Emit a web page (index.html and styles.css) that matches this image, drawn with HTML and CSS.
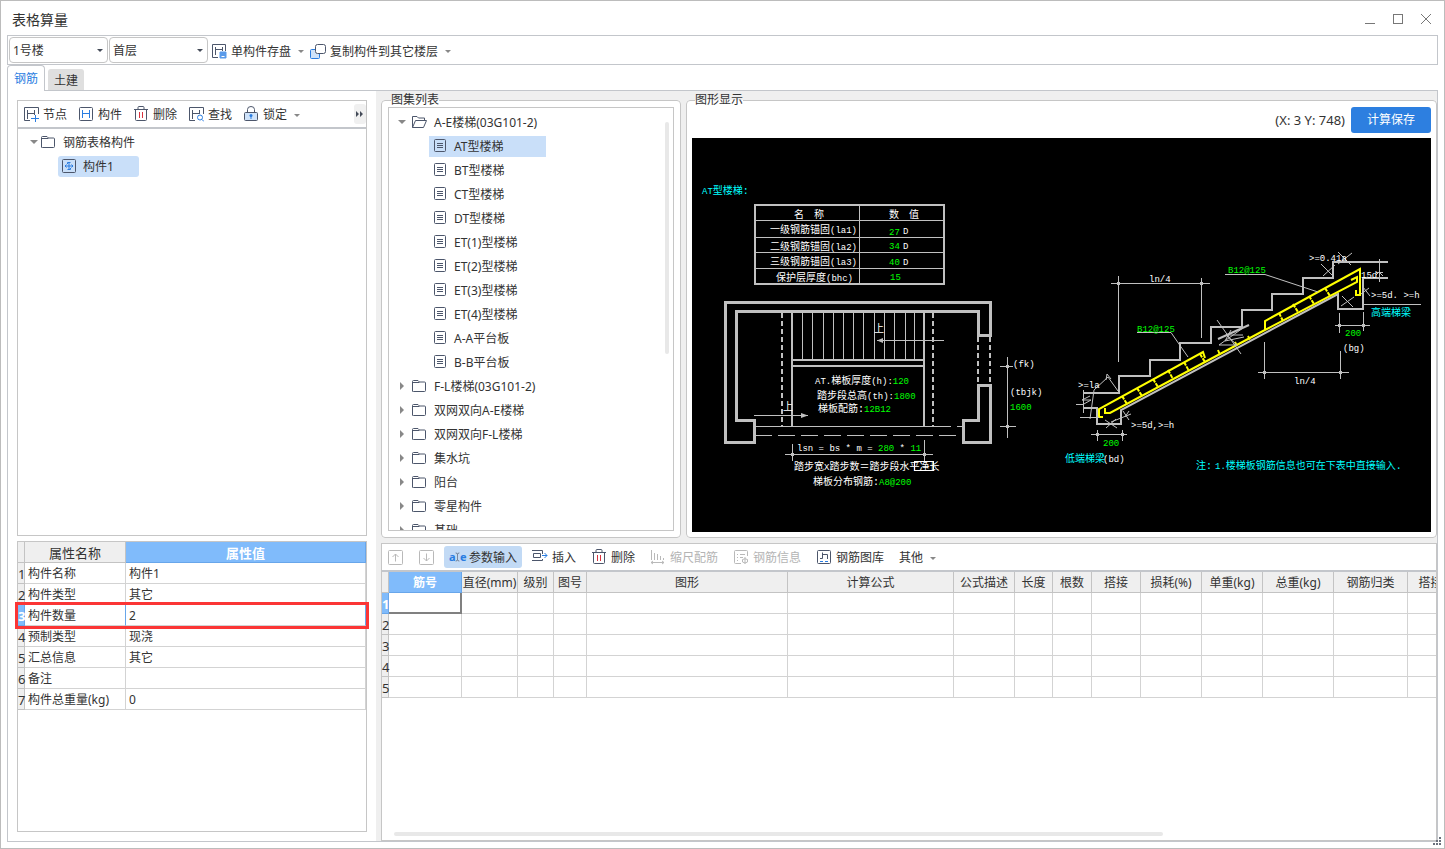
FILE: index.html
```html
<!DOCTYPE html>
<html lang="zh-CN">
<head>
  <meta charset="UTF-8">
  <meta name="viewport" content="width=device-width, initial-scale=1.0">
  <title>表格算量</title>
  <link rel="stylesheet" href="styles.css">
</head>
<body>

  <!-- Shared icons -->
  <svg class="sprite" aria-hidden="true">
    <symbol id="i-folder" viewBox="0 0 16 16"><path d="M1.5 13.500V3.500q0-1 1-1H7l1.500 1.500H13.500q1 0 1 1V12.500q0 1-1 1H2.500q-1 0-1-1M1.500 4.500H8.500"/></symbol>
    <symbol id="i-open" viewBox="0 0 16 16"><path d="M1.500 13.500V2.500H6l1.500 1.500H13.500V6M1.500 13.500L4.500 6.500H15.500L12.500 13.500Z"/></symbol>
    <symbol id="i-doc" viewBox="0 1 16 16"><rect x="2.500" y="2.500" width="11" height="12" rx="1"/><path d="M5 6.500H11M5 8.500H11M5 10.500H11"/></symbol>
    <symbol id="i-node" viewBox="0 0 16 16"><path d="M15.500 8V1.500H1.500V14.500H7M4.500 4V13M4.500 7.500H11.500M11.500 4V9"/><path class="blue" d="M8 12.500H16M12.500 9V16"/></symbol>
    <symbol id="i-part" viewBox="0 0 16 16"><rect x="1.500" y="1.500" width="13" height="13" rx="1"/><path class="blue" d="M4.500 4V12M11.500 4V12M4.500 7.500H11.500"/></symbol>
    <symbol id="i-trash" viewBox="0 0 16 16"><path d="M1 3.500H15M5 3V1.500Q5 .500 6 .500H10Q11 .500 11 1.500V3M2.500 3.500V13.500Q2.500 14.500 3.500 14.500H12.500Q13.500 14.500 13.500 13.500V3.500"/><path class="red" d="M6.500 6V12M9.500 6V12"/></symbol>
    <symbol id="i-find" viewBox="0 0 16 16"><path d="M15.500 8V1.500H1.500V14.500H7M4.500 4V13M4.500 7.500H11.500M11.500 4V8"/><circle class="blue" cx="12" cy="11.500" r="2.500"/><path class="blue" d="M14 13.500L16 15.500"/></symbol>
    <symbol id="i-lock" viewBox="0 0 16 16"><path d="M4.500 6V3.500Q4.500 .500 8 .500T11.500 3.500V6"/><rect class="tint" x="1.500" y="6.500" width="13" height="8" rx="1"/><circle class="dot" cx="8" cy="9.500" r="1.500"/><path class="blue" d="M8 9V13"/></symbol>
    <symbol id="i-save" viewBox="0 0 16 16"><path d="M14.500 8V1.500H1.500V14.500H7M4.500 4V12M4.500 6.500H11.500M11.500 4V8"/><path class="fillblue" d="M9 9H15V15H9Z"/><path class="white" d="M10.500 13.500H13.500"/></symbol>
    <symbol id="i-copy" viewBox="0 0 16 16"><rect class="tint blue" x=".500" y="6.500" width="9" height="9" rx="1"/><rect class="paper" x="5.500" y="1.500" width="10" height="9" rx="2"/></symbol>
    <symbol id="i-member" viewBox="0 0 16 16"><rect x="1.500" y="1.500" width="13" height="13" rx="1"/><path class="blue" d="M8 4V12M4 8H12M5.500 6.500L4 8L5.500 9.500M10.500 6.500L12 8L10.500 9.500M6.500 6V4.500H9.500M9.500 10V11.500H6.500"/></symbol>
    <symbol id="i-up" viewBox="0 0 16 16"><rect x="1.500" y="1.500" width="14" height="14" rx="1"/><path d="M8.500 12.500V5M5.500 8L8.500 5L11.500 8"/></symbol>
    <symbol id="i-down" viewBox="0 0 16 16"><rect x="1.500" y="1.500" width="14" height="14" rx="1"/><path d="M8.500 4.500V12M5.500 9L8.500 12L11.500 9"/></symbol>
    <symbol id="i-insert" viewBox="0 0 16 16"><path d="M0 1.500H10.500V5M0 11.500H10.500V10M1.500 4.500H8.500V8.500H1.500Z"/><path class="blue" d="M10 6.500H15M12.500 4L15 6.500L12.500 9"/></symbol>
    <symbol id="i-scale" viewBox="0 0 16 16"><path d="M1.500 1V11M4.500 4V11M7.500 5V11M10.500 7V11M13.500 9V11M1 13.500H14M3 12L1 13.500L3 15M12 12L14 13.500L12 15"/></symbol>
    <symbol id="i-info" viewBox="0 0 16 16"><path d="M14.500 7V2.500Q14.500 1.500 13.500 1.500H2.500Q1.500 1.500 1.500 2.500V13.500Q1.500 14.500 2.500 14.500H8M4 5.500H5M7 5.500H12M4 8.500H5M7 8.500H10M4 11.500H5M12 8V15M9.500 10.500V13Q12 15 14.500 13V10.500Q12 9 9.500 10.500"/></symbol>
    <symbol id="i-lib" viewBox="0 0 16 16"><rect x="1.500" y="1.500" width="13" height="13" rx="1"/><path d="M6.500 3.500V9.500H4M6.500 5.500H11.500V10"/><path class="blue" d="M4 12.500H7M9 12.500H12"/></symbol>
    <symbol id="i-ibeam" viewBox="0 0 8 16"><path d="M1 1.500Q4 1.500 4 4V12Q4 14.500 1 14.500M7 1.500Q4 1.500 4 4M4 12Q4 14.500 7 14.500"/></symbol>
  </svg>

  <div class="window">
    <header class="titlebar">
      <h1>表格算量</h1>
      <div class="window-buttons">
        <button type="button" aria-label="最小化"><svg viewBox="0 0 12 12"><path d="M1 10.500H11"/></svg></button>
        <button type="button" aria-label="最大化"><svg viewBox="0 0 12 12"><rect x="1.500" y="1.500" width="9" height="9"/></svg></button>
        <button type="button" aria-label="关闭"><svg viewBox="0 0 12 12"><path d="M1 1L11 11M11 1L1 11"/></svg></button>
      </div>
    </header>

    <div class="main-toolbar">
      <span class="select"><select aria-label="楼栋"><option>1号楼</option></select></span>
      <span class="select"><select aria-label="楼层"><option>首层</option></select></span>
      <button type="button" class="tool"><svg class="icon"><use href="#i-save"/></svg>单构件存盘<i class="caret"></i></button>
      <button type="button" class="tool"><svg class="icon"><use href="#i-copy"/></svg>复制构件到其它楼层<i class="caret"></i></button>
    </div>

    <nav class="tabs">
      <button type="button" class="tab active">钢筋</button>
      <button type="button" class="tab">土建</button>
    </nav>

    <main class="page">
      <section class="left">
        <div class="box members">
          <div class="toolbar">
            <button type="button" class="tool"><svg class="icon"><use href="#i-node"/></svg>节点</button>
            <button type="button" class="tool"><svg class="icon"><use href="#i-part"/></svg>构件</button>
            <button type="button" class="tool"><svg class="icon"><use href="#i-trash"/></svg>删除</button>
            <button type="button" class="tool"><svg class="icon"><use href="#i-find"/></svg>查找</button>
            <button type="button" class="tool"><svg class="icon"><use href="#i-lock"/></svg>锁定<i class="caret"></i></button>
            <button type="button" class="more" aria-label="更多"><svg viewBox="0 0 8 6"><path d="M0 0L3 3L0 6ZM4 0L7 3L4 6Z"/></svg></button>
          </div>
          <ul class="tree member-tree">
            <li><i class="arrow open"></i><svg class="icon"><use href="#i-folder"/></svg><span>钢筋表格构件</span></li>
            <li class="member"><span class="node selected"><svg class="icon"><use href="#i-member"/></svg>构件1</span></li>
          </ul>
        </div>

        <div class="box props">
          <table class="grid">
            <colgroup><col class="c-num"><col class="c-name"><col></colgroup>
            <thead><tr><th></th><th>属性名称</th><th class="current">属性值</th></tr></thead>
            <tbody>
              <tr><th>1</th><td>构件名称</td><td>构件1</td></tr>
              <tr><th>2</th><td>构件类型</td><td>其它</td></tr>
              <tr class="marked"><th class="current">3</th><td>构件数量</td><td>2</td></tr>
              <tr><th>4</th><td>预制类型</td><td>现浇</td></tr>
              <tr><th>5</th><td>汇总信息</td><td>其它</td></tr>
              <tr><th>6</th><td>备注</td><td></td></tr>
              <tr><th>7</th><td>构件总重量(kg)</td><td>0</td></tr>
            </tbody>
          </table>
        </div>
      </section>

      <section class="right">
        <div class="upper">
          <fieldset class="atlas">
            <legend>图集列表</legend>
            <div class="atlas-list">
              <ul class="tree">
                <li><i class="arrow open"></i><svg class="icon"><use href="#i-open"/></svg><span>A-E楼梯(03G101-2)</span></li>
                <li class="child"><span class="node selected"><svg class="icon"><use href="#i-doc"/></svg>AT型楼梯</span></li>
                <li class="child"><span class="node"><svg class="icon"><use href="#i-doc"/></svg>BT型楼梯</span></li>
                <li class="child"><span class="node"><svg class="icon"><use href="#i-doc"/></svg>CT型楼梯</span></li>
                <li class="child"><span class="node"><svg class="icon"><use href="#i-doc"/></svg>DT型楼梯</span></li>
                <li class="child"><span class="node"><svg class="icon"><use href="#i-doc"/></svg>ET(1)型楼梯</span></li>
                <li class="child"><span class="node"><svg class="icon"><use href="#i-doc"/></svg>ET(2)型楼梯</span></li>
                <li class="child"><span class="node"><svg class="icon"><use href="#i-doc"/></svg>ET(3)型楼梯</span></li>
                <li class="child"><span class="node"><svg class="icon"><use href="#i-doc"/></svg>ET(4)型楼梯</span></li>
                <li class="child"><span class="node"><svg class="icon"><use href="#i-doc"/></svg>A-A平台板</span></li>
                <li class="child"><span class="node"><svg class="icon"><use href="#i-doc"/></svg>B-B平台板</span></li>
                <li><i class="arrow"></i><svg class="icon"><use href="#i-folder"/></svg><span>F-L楼梯(03G101-2)</span></li>
                <li><i class="arrow"></i><svg class="icon"><use href="#i-folder"/></svg><span>双网双向A-E楼梯</span></li>
                <li><i class="arrow"></i><svg class="icon"><use href="#i-folder"/></svg><span>双网双向F-L楼梯</span></li>
                <li><i class="arrow"></i><svg class="icon"><use href="#i-folder"/></svg><span>集水坑</span></li>
                <li><i class="arrow"></i><svg class="icon"><use href="#i-folder"/></svg><span>阳台</span></li>
                <li><i class="arrow"></i><svg class="icon"><use href="#i-folder"/></svg><span>零星构件</span></li>
                <li><i class="arrow"></i><svg class="icon"><use href="#i-folder"/></svg><span>基础</span></li>
              </ul>
              <div class="scroll-y"></div>
            </div>
          </fieldset>

          <fieldset class="drawing">
            <legend>图形显示</legend>
            <div class="drawing-head">
              <span>(X: 3 Y: 748)</span>
              <button type="button" class="primary">计算保存</button>
            </div>
            <div class="canvas">
              <svg class="cad" viewBox="692 138 739 394">
                <!-- Anchorage table -->
                <rect class="mid" x="755" y="205" width="189" height="79"/>
                <path class="thin" d="M859.500 205V284M755 220.500H944M755 237.500H944M755 252.500H944M755 268.500H944"/>
                <text class="c" x="702" y="194"><tspan class="n">AT</tspan>型楼梯:</text>
                <text x="794" y="218">名</text><text x="814" y="218">称</text>
                <text x="889" y="218">数</text><text x="909" y="218">值</text>
                <text x="770" y="233">一级钢筋锚固<tspan class="n">(la1)</tspan></text>
                <text x="770" y="250">二级钢筋锚固<tspan class="n">(la2)</tspan></text>
                <text x="770" y="265">三级钢筋锚固<tspan class="n">(la3)</tspan></text>
                <text x="776" y="281">保护层厚度<tspan class="n">(bhc)</tspan></text>
                <text class="g n" x="889" y="235">27</text><text class="n" x="903" y="234">D</text>
                <text class="g n" x="889" y="249">34</text><text class="n" x="903" y="249">D</text>
                <text class="g n" x="889" y="265">40</text><text class="n" x="903" y="265">D</text>
                <text class="g n" x="890" y="280">15</text>

                <!-- Plan -->
                <path class="wall" d="M725.500 302.500H990.500V335.500H978.500V311.500H736.500V420.500H754.500V442.500H725.500ZM978.500 385.500H990.500V442.500H963.500V420.500H978.500Z"/>
                <path class="mid dash" d="M978 337V385M990 337V385M782 313V427M933 313V427"/>
                <path class="mid" d="M792 313V427M924 313V427M792 360H924M792 366H924"/>
                <path class="thin" d="M802.500 313V359M812.500 313V359M823.500 313V359M833.500 313V359M843.500 313V359M853.500 313V359M863.500 313V359M874.500 313V359M884.500 313V359M894.500 313V359M905.500 313V359M914.500 313V359M755 426.500H951M957 426.500H963"/>
                <path class="thin longdash" d="M755 435.500H963"/>
                <path class="thin" d="M877 340.500H944M754 415.500H808"/>
                <path class="head" d="M877 340.500L883 338V343ZM808 415.500L801 413V418Z"/>
                <text x="874" y="332">上</text><text x="783" y="410">上</text>
                <text x="815" y="384"><tspan class="n">AT.</tspan>梯板厚度<tspan class="n">(h):</tspan><tspan class="g n">120</tspan></text>
                <text x="817" y="399">踏步段总高<tspan class="n">(th):</tspan><tspan class="g n">1800</tspan></text>
                <text x="818" y="412">梯板配筋:<tspan class="g n">12B12</tspan></text>
                <path class="thin" d="M1007.500 357V438M1000 366.500H1013M1000 426.500H1016M785 454.500H933M792.500 444V461M924.500 440V461"/>
                <path class="head" d="M1006 365H1009V368H1006ZM1006 425H1009V428H1006ZM791 453H794V456H791ZM923 453H926V456H923Z"/>
                <text class="n" x="1013" y="367">(fk)</text>
                <text class="n" x="1010" y="395">(tbjk)</text>
                <text class="g n" x="1010" y="410">1600</text>
                <text class="n" x="797" y="451">lsn = bs * m = <tspan class="g">280</tspan> * <tspan class="g">11</tspan></text>
                <text x="794" y="470">踏步宽<tspan class="n">X</tspan>踏步数＝踏步段水平净长</text>
                <rect class="frame" x="914.500" y="461.500" width="19" height="9"/>
                <text x="813" y="485">梯板分布钢筋:<tspan class="g n">A8@200</tspan></text>

                <!-- Stair section -->
                <path class="mid" d="M1388 262H1333V278H1303V294H1272V310H1242V327H1211V343H1180V360H1150V376H1119V393H1084M1084 408H1097V424H1121V410L1338 294V309H1363V278H1388"/>
                <path class="bar" d="M1103 417H1099V409L1203 352L1205 358M1105 408V413H1110L1205 362L1263 331L1357 282V277L1351 280M1265 330V321L1360 269V295H1356V290"/>
                <path class="bar tie" d="M1122 396L1127 404M1137 388L1142 396M1153 379L1158 387M1168 370L1173 379M1184 362L1189 371M1200 354L1205 362M1279 313L1283 321M1293 304L1298 312M1309 296L1314 304M1325 288L1330 296M1218 350L1220 355M1235 342L1237 346M1248 336L1250 340"/>
                <path class="mid" d="M1218 339L1249 325"/>
                <path class="thin" d="M1217 320L1241 354M1243 335H1226L1237 345H1219L1243 328M1231 330L1225 341L1244 337"/>
                <path class="thin" d="M1111 283.500H1210M1118.500 276V362M1201.500 278V338M1225 274.500H1265L1318 292M1137 332.500H1171L1188 357"/>
                <path class="thin" d="M1258 372.500H1349M1264.500 342V379M1340.500 351V379M1335 325.500H1370M1339.500 313V333M1363.500 312V331M1363 304.500H1421M1379.500 259V282M1376 272.500H1383M1091 434.500H1127M1097.500 430V441M1122.500 430V441"/>
                <path class="thin" d="M1321 264L1334 277M1335 265L1323 276M1338 252L1351 265M1352 253L1338 264M1342 296L1353 307M1354 297L1341 306M1363 287L1370 296M1369 288L1361 294M1376 275L1379 272L1383 276"/>
                <path class="thin" d="M1083.500 390V413M1076 404.500H1083L1091 400H1082L1090 396M1080 417.500H1099M1094 390L1090 419M1094 390L1108 377L1118 391M1106 380L1107 374L1111 379M1105 420L1117 428M1116 419L1106 428M1111 422L1131 414M1123 411L1129 420M1129 411L1125 417"/>
                <path class="head" d="M1117 282H1120V285H1117ZM1200 282H1203V285H1200ZM1263 371H1266V374H1263ZM1339 371H1342V374H1339ZM1338 324H1341V327H1338ZM1362 324H1365V327H1362ZM1096 433H1099V436H1096ZM1121 433H1124V436H1121Z"/>
                <text class="n" x="1149" y="282">ln/4</text>
                <text class="n" x="1294" y="384">ln/4</text>
                <text class="g n" x="1228" y="273">B12@125</text>
                <text class="g n" x="1137" y="332">B12@125</text>
                <text class="n" x="1309" y="261">&gt;=0.41a</text>
                <text class="n" x="1361" y="278">15d</text>
                <text class="n" x="1371" y="298">&gt;=5d. &gt;=h</text>
                <text class="c" x="1371" y="316">高端梯梁</text>
                <text class="g n" x="1345" y="336">200</text>
                <text class="n" x="1343" y="351">(bg)</text>
                <text class="n" x="1078" y="388">&gt;=la</text>
                <text class="n" x="1131" y="428">&gt;=5d,&gt;=h</text>
                <text class="g n" x="1103" y="446">200</text>
                <text class="c" x="1065" y="462">低端梯梁</text>
                <text class="n" x="1103" y="462">(bd)</text>
                <text class="c" x="1196" y="469">注:</text>
                <text class="c" x="1215" y="469"><tspan class="n">1.</tspan>楼梯板钢筋信息也可在下表中直接输入.</text>
              </svg>
            </div>
          </fieldset>
        </div>

        <div class="lower">
          <div class="toolbar">
            <button type="button" class="tool" aria-label="上移" disabled><svg class="icon"><use href="#i-up"/></svg></button>
            <button type="button" class="tool" aria-label="下移" disabled><svg class="icon"><use href="#i-down"/></svg></button>
            <button type="button" class="tool active"><span class="icon ae"><b>a</b><svg><use href="#i-ibeam"/></svg><b>e</b></span>参数输入</button>
            <button type="button" class="tool"><svg class="icon"><use href="#i-insert"/></svg>插入</button>
            <button type="button" class="tool"><svg class="icon"><use href="#i-trash"/></svg>删除</button>
            <button type="button" class="tool" disabled><svg class="icon"><use href="#i-scale"/></svg>缩尺配筋</button>
            <button type="button" class="tool" disabled><svg class="icon"><use href="#i-info"/></svg>钢筋信息</button>
            <button type="button" class="tool"><svg class="icon"><use href="#i-lib"/></svg>钢筋图库</button>
            <button type="button" class="tool">其他<i class="caret"></i></button>
          </div>
          <div class="rebar">
            <table class="grid rebar-table">
              <colgroup>
                <col class="c-num"><col class="c-73"><col class="c-56"><col class="c-36"><col class="c-33"><col class="c-201"><col class="c-166"><col class="c-61"><col class="c-38"><col class="c-39"><col class="c-49"><col class="c-61"><col class="c-61"><col class="c-71"><col class="c-74"><col class="c-46">
              </colgroup>
              <thead>
                <tr><th></th><th class="current">筋号</th><th>直径(mm)</th><th>级别</th><th>图号</th><th>图形</th><th>计算公式</th><th>公式描述</th><th>长度</th><th>根数</th><th>搭接</th><th>损耗(%)</th><th>单重(kg)</th><th>总重(kg)</th><th>钢筋归类</th><th>搭接</th></tr>
              </thead>
              <tbody>
                <tr><th class="current">1</th><td class="focus"></td><td></td><td></td><td></td><td></td><td></td><td></td><td></td><td></td><td></td><td></td><td></td><td></td><td></td><td></td></tr>
                <tr><th>2</th><td></td><td></td><td></td><td></td><td></td><td></td><td></td><td></td><td></td><td></td><td></td><td></td><td></td><td></td><td></td></tr>
                <tr><th>3</th><td></td><td></td><td></td><td></td><td></td><td></td><td></td><td></td><td></td><td></td><td></td><td></td><td></td><td></td><td></td></tr>
                <tr><th>4</th><td></td><td></td><td></td><td></td><td></td><td></td><td></td><td></td><td></td><td></td><td></td><td></td><td></td><td></td><td></td></tr>
                <tr><th>5</th><td></td><td></td><td></td><td></td><td></td><td></td><td></td><td></td><td></td><td></td><td></td><td></td><td></td><td></td><td></td></tr>
              </tbody>
            </table>
          </div>
          <div class="scroll-x"></div>
        </div>
      </section>
    </main>

    <svg class="grip" viewBox="0 0 8 8"><path d="M6 0H8V2H6ZM3 3H5V5H3ZM6 3H8V5H6ZM0 6H2V8H0ZM3 6H5V8H3ZM6 6H8V8H6Z"/></svg>
  </div>

</body>
</html>
```

FILE: styles.css
```css
* {
  box-sizing: border-box;
}

body {
  margin: 0;
  font-family: "Noto Sans", "Noto Sans CJK SC", sans-serif;
  font-size: 12px;
  line-height: 18px;
  color: #333;
  background-color: #fff;
}

button,
select {
  font: inherit;
  color: inherit;
  margin: 0;
  padding: 0;
  border: none;
  background: none;
  white-space: nowrap;
}

.sprite {
  position: absolute;
  width: 0;
  height: 0;
}

.window {
  position: relative;
  display: flex;
  flex-direction: column;
  height: 100vh;
  padding: 0 6px 6px;
  border: 1px solid #bcbcbc;
}

/* Title bar */
.titlebar {
  display: flex;
  align-items: center;
  justify-content: space-between;
  height: 34px;
  padding: 2px 6px 0 5px;
}

h1 {
  margin: 0;
  padding-top: 2px;
  font-size: 14px;
  font-weight: normal;
}

.window-buttons {
  display: flex;
  gap: 16px;
}

.window-buttons button {
  display: flex;
}

.window-buttons svg {
  width: 12px;
  height: 12px;
  fill: none;
  stroke: #777;
}

/* Icons */
.icon {
  flex: none;
  width: 16px;
  height: 16px;
  fill: none;
  stroke: #4c566b;
}

.blue {
  stroke: #2a7de1;
}

.red {
  stroke: #d9333f;
}

.white {
  stroke: #fff;
}

.tint {
  fill: #cfe3fa;
}

.paper {
  fill: #fff;
}

.dot {
  fill: #2a7de1;
  stroke: none;
}

.fillblue {
  fill: #5a9bea;
  stroke: #5a9bea;
}

.caret {
  width: 0;
  margin-left: 3px;
  border: 3px solid transparent;
  border-top-color: #888;
  border-bottom: none;
}

/* Toolbars */
.main-toolbar {
  display: flex;
  align-items: center;
  gap: 1px;
  height: 30px;
  padding: 0 1px;
  border: 1px solid #c3c6cb;
}

.select {
  position: relative;
}

.select select {
  display: block;
  width: 99px;
  height: 26px;
  padding: 1px 3px 0;
  border: 1px solid #c6c6c6;
  border-radius: 4px;
  appearance: none;
}

.select::after {
  content: "";
  position: absolute;
  right: 5px;
  top: 12px;
  border: 3px solid transparent;
  border-top-color: #444b58;
  border-bottom: none;
}

/* Labels sit one pixel below the icons */
.tool {
  display: flex;
  align-items: center;
  gap: 4px;
  padding-top: 2px;
}

.tool .icon,
.node .icon {
  margin-top: -2px;
}

.main-toolbar .tool {
  padding: 3px 3px 0 2px;
}

.toolbar {
  display: flex;
  align-items: center;
  height: 28px;
  border-bottom: 2px solid #c3c6cb;
}

.members .toolbar {
  gap: 11px;
  padding-left: 5px;
}

.members .tool {
  flex: none;
}

.more {
  flex: none;
  width: 12px;
  height: 20px;
  margin-left: auto;
  border-radius: 3px;
  background-color: #f0f0f0;
}

.more svg {
  display: block;
  width: 8px;
  height: 6px;
  margin: 0 auto;
  fill: #444b58;
}

.lower .toolbar {
  flex: none;
  gap: 5px;
}

.lower .tool {
  height: 22px;
  padding: 2px 5px 0;
  border-radius: 3px;
}

.lower .tool.active {
  background-color: #c2daf5;
}

.tool:disabled {
  color: #b4b4b4;
}

.tool:disabled .icon {
  stroke: #b9b9b9;
}

.ae {
  display: flex;
  align-items: center;
  font-size: 11px;
  line-height: 14px;
}

.ae b {
  width: 6px;
  color: #2a7de1;
}

.ae svg {
  flex: none;
  width: 5px;
  height: 16px;
}

/* Tabs */
.tabs {
  display: flex;
  align-items: flex-end;
  gap: 3px;
  height: 25px;
}

.tab {
  width: 36px;
  height: 21px;
  padding-top: 2px;
  border-radius: 3px 3px 0 0;
  background-color: #dfdfdf;
}

.tab.active {
  position: relative;
  width: 38px;
  height: 26px;
  margin-bottom: -1px;
  padding-top: 0;
  border: 1px solid #c3c6cb;
  border-bottom: none;
  border-radius: 4px 4px 0 0;
  background-color: #fff;
  color: #2a7de1;
}

/* Page panes */
.page {
  flex: 1;
  display: grid;
  grid-template-columns: 368px minmax(0, 1fr);
  grid-template-rows: minmax(0, 1fr);
  min-height: 0;
  border: 1px solid #c3c6cb;
}

.left {
  display: grid;
  grid-template-rows: minmax(0, 3fr) minmax(0, 2fr);
  gap: 5px;
  padding: 9px;
}

.box {
  border: 1px solid #c6c6c6;
}

.right {
  display: grid;
  grid-template-rows: minmax(0, 3fr) minmax(0, 2fr);
  gap: 5px;
  min-width: 0;
  padding-left: 5px;
  background-color: #efefef;
}

.upper {
  display: grid;
  grid-template-columns: 300px minmax(0, 1fr);
  grid-template-rows: minmax(0, 1fr);
  gap: 5px;
}

fieldset {
  display: flex;
  flex-direction: column;
  min-width: 0;
  min-height: 0;
  margin: 2px 0 0;
  padding: 0 6px 6px;
  border: 1px solid #c6c6c6;
  border-radius: 4px;
  background-color: #fff;
}

.drawing {
  padding: 0 5px 5px;
}

legend {
  margin-left: 3px;
  padding: 0;
  line-height: 14px;
}

/* Trees */
.tree {
  list-style: none;
  margin: 0;
  padding: 2px 0 0 9px;
}

.member-tree {
  padding: 1px 0 0 12px;
}

.tree li {
  display: flex;
  align-items: center;
  height: 24px;
}

.tree li > span {
  padding-top: 2px;
}

.tree li > .icon {
  margin: 0 7px 0 5px;
}

.member-tree li > .icon {
  margin-left: 2px;
}

.arrow {
  width: 8px;
  height: 8px;
  background-color: #888;
  clip-path: polygon(25% 0, 75% 50%, 25% 100%);
}

.arrow.open {
  clip-path: polygon(0 25%, 100% 25%, 50% 75%);
}

.node {
  display: flex;
  align-items: center;
  gap: 6px;
  height: 21px;
  padding: 0 3px;
}

.node.selected {
  background-color: #c9dff9;
}

.tree .child {
  padding-left: 31px;
}

.child .node {
  min-width: 117px;
}

.tree .member {
  padding-left: 28px;
}

.member .node {
  min-width: 81px;
  border-radius: 3px;
}

.atlas-list {
  position: relative;
  flex: 1;
  min-height: 0;
  overflow: hidden;
  border: 1px solid #c6c6c6;
}

.scroll-y {
  position: absolute;
  top: 14px;
  right: 4px;
  width: 4px;
  height: 55%;
  border-radius: 2px;
  background-color: #e8e8e8;
}

/* Drawing pane */
.drawing-head {
  display: flex;
  align-items: center;
  justify-content: flex-end;
  gap: 6px;
  height: 31px;
  padding-bottom: 6px;
}

.drawing-head span {
  font-size: 13px;
}

.primary {
  width: 80px;
  height: 26px;
  border-radius: 3px;
  background-color: #2d7fe0;
  color: #fff;
}

.canvas {
  flex: 1;
  min-height: 0;
  background-color: #000;
}

.cad {
  display: block;
  width: 100%;
  height: 100%;
  fill: none;
  stroke: #c0c0c0;
}

.cad text {
  font-family: "Liberation Mono", "Noto Sans CJK SC", monospace;
  font-size: 10px;
  fill: #fff;
  stroke: none;
  white-space: pre;
}

.cad .n {
  font-size: 9px;
}

.cad .g {
  fill: #0f0;
}

.cad .c {
  fill: #0ff;
}

.thin {
  stroke-width: 1;
}

.mid {
  stroke-width: 2;
}

.wall {
  stroke-width: 3;
}

.dash {
  stroke-dasharray: 5 3;
}

.longdash {
  stroke-dasharray: 17 6;
}

.head {
  fill: #c0c0c0;
  stroke: none;
}

.frame {
  stroke: #fff;
}

.bar {
  stroke: #ff0;
  stroke-width: 2;
}

.tie {
  stroke-dasharray: 4 1;
}

/* Tables */
.grid {
  width: 100%;
  table-layout: fixed;
  border-collapse: separate;
  border-spacing: 0;
}

.grid th,
.grid td {
  height: 21px;
  padding: 2px 3px 0;
  line-height: 18px;
  border-right: 1px solid #d3d3d3;
  border-bottom: 1px solid #d3d3d3;
  white-space: nowrap;
}

.grid th {
  padding: 2px 0 0;
  font-weight: normal;
  border-color: #c3c3c3;
  background-color: #efefef;
}

.grid th.current {
  font-weight: bold;
  color: #fff;
  border-color: #68a6ea;
  background-color: #80bbfb;
}

.grid tbody th {
  font-size: 13px;
}

.props thead th {
  font-size: 13px;
}

.marked {
  outline: 3px solid #fb3535;
}

.marked td {
  border-right-color: #68a6ea;
}

.c-num { width: 7px; }
.c-name { width: 101px; }
.c-33 { width: 33px; }
.c-36 { width: 36px; }
.c-38 { width: 38px; }
.c-39 { width: 39px; }
.c-46 { width: 46px; }
.c-49 { width: 49px; }
.c-56 { width: 56px; }
.c-61 { width: 61px; }
.c-71 { width: 71px; }
.c-73 { width: 73px; }
.c-74 { width: 74px; }
.c-166 { width: 166px; }
.c-201 { width: 201px; }

/* Rebar pane */
.lower {
  display: flex;
  flex-direction: column;
  min-width: 0;
  border: 1px solid #c6c6c6;
  background-color: #fff;
}

.rebar {
  flex: 1;
  min-height: 0;
  overflow: hidden;
}

.rebar-table {
  width: 1072px;
}

.grid .focus {
  border-right: 2px solid #808080;
  border-bottom: 2px solid #808080;
}

.scroll-x {
  flex: none;
  width: 73%;
  height: 4px;
  margin: 0 0 4px 12px;
  border-radius: 2px;
  background-color: #e8e8e8;
}

.grip {
  position: absolute;
  right: 3px;
  bottom: 3px;
  width: 8px;
  height: 8px;
  fill: #6a707c;
}
```
